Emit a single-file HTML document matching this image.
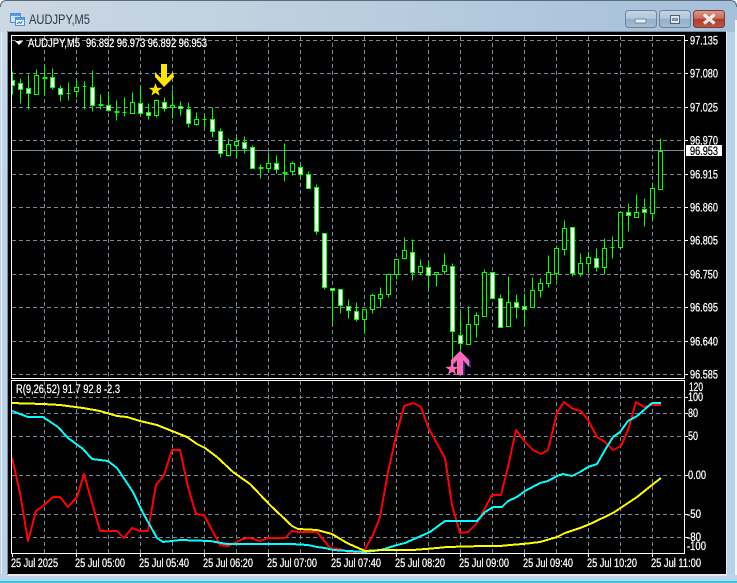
<!DOCTYPE html>
<html><head><meta charset="utf-8"><title>AUDJPY,M5</title>
<style>
html,body{margin:0;padding:0;background:#fff;width:737px;height:583px;overflow:hidden}
svg{display:block}
text{font-family:"Liberation Sans",sans-serif;font-size:11.500px;fill:#fff;stroke:#fff;stroke-width:.25px}
</style></head><body>
<svg width="737" height="583" viewBox="0 0 737 583" xmlns="http://www.w3.org/2000/svg">
<defs>
<linearGradient id="tb" x1="0" x2="1" y1="0" y2="0"><stop offset="0" stop-color="#ccd8e3"/><stop offset=".5" stop-color="#b9cddf"/><stop offset="1" stop-color="#a4c0db"/></linearGradient>
<linearGradient id="lf" x1="0" x2="0" y1="0" y2="1"><stop offset="0" stop-color="#d3dde6"/><stop offset=".22" stop-color="#bdd4eb"/><stop offset="1" stop-color="#b9d2ea"/></linearGradient>
<linearGradient id="bt" x1="0" x2="0" y1="0" y2="1"><stop offset="0" stop-color="#c4d6e6"/><stop offset=".48" stop-color="#afc6da"/><stop offset=".5" stop-color="#94aec8"/><stop offset="1" stop-color="#a3bdd6"/></linearGradient>
<linearGradient id="cl" x1="0" x2="0" y1="0" y2="1"><stop offset="0" stop-color="#dc9a8a"/><stop offset=".48" stop-color="#c8685a"/><stop offset=".5" stop-color="#b03c2c"/><stop offset="1" stop-color="#b85844"/></linearGradient>
<clipPath id="cm"><rect x="12" y="36" width="672" height="342"/></clipPath>
<clipPath id="cs"><rect x="12" y="381" width="672" height="172"/></clipPath>
<polygon id="st" points="0,-7 1.65,-2.27 6.66,-2.16 2.66,.87 4.11,5.66 0,2.8 -4.11,5.66 -2.66,.87 -6.66,-2.16 -1.65,-2.27"/>
</defs>

<!-- window chrome -->
<rect x="0" y="0" width="737" height="583" rx="6" fill="url(#lf)"/>
<path d="M0 6Q0 0 6 0H731Q737 0 737 6V32H0Z" fill="url(#tb)"/>
<path d="M.5 7Q.5 .5 7 .5H730Q736.5 .5 736.5 7" fill="none" stroke="#5c6b78" stroke-width="1"/>
<rect x="1" y="32" width="1" height="542" fill="#e6eef6"/>
<rect x="727" y="32" width="8" height="543" fill="#b8d1ea"/>
<rect x="735" y="20" width="2" height="562" fill="#f2f6fa"/>
<rect x="0" y="575" width="737" height="6" fill="#bad3eb"/>
<rect x="0" y="581" width="737" height="2" fill="#2ccbe0"/>
<rect x="7" y="31" width="720" height="545" fill="#e4eaf0"/>
<rect x="7" y="31" width="719" height="1" fill="#7d8a97"/>
<rect x="7" y="31" width="1" height="544" fill="#7d8a97"/>
<rect x="8" y="32" width="718" height="542" fill="#000"/>

<!-- title icon -->
<g shape-rendering="crispEdges">
<rect x="10.500" y="13.500" width="10" height="9" fill="#cfe2f6" stroke="#4f8fd0"/>
<rect x="11" y="14" width="9" height="2" fill="#5a9be0"/>
<rect x="15.500" y="17.500" width="9" height="8" fill="#eef6fd" stroke="#4f8fd0"/>
<rect x="16" y="18" width="8" height="2" fill="#5a9be0"/>
</g>
<path d="M17 24l2-2 1.500 1.500 2-2.500" fill="none" stroke="#3c78c0" stroke-width="1"/>
<text x="29" y="24" style="font-size:13.500px;fill:#26384a;stroke:none" textLength="61" lengthAdjust="spacingAndGlyphs">AUDJPY,M5</text>

<!-- window buttons -->
<rect x="625.500" y="10.500" width="31" height="17" rx="3" fill="url(#bt)" stroke="#6f8398"/>
<rect x="635" y="19" width="11" height="4" rx="1" fill="#e9eef3" stroke="#5b6e82" stroke-width=".7"/>
<rect x="659.500" y="10.500" width="31" height="17" rx="3" fill="url(#bt)" stroke="#6f8398"/>
<rect x="670.500" y="15.500" width="9" height="8" fill="#dfe8f0" stroke="#4e6075"/>
<rect x="672.500" y="18.500" width="5" height="2" fill="#8ea8c0" stroke="#4e6075" stroke-width=".6"/>
<rect x="693.500" y="10.500" width="31" height="17" rx="3" fill="url(#cl)" stroke="#7a3a38"/>
<path d="M704 14.500L714.500 23.500M714.500 14.500L704 23.500" stroke="#f2ecea" stroke-width="3.200"/>

<!-- grids -->
<g stroke="#778899" stroke-width="1" stroke-dasharray="4 3" fill="none" shape-rendering="crispEdges">
<path clip-path="url(#cm)" d="M12 40.500H684M12 73.500H684M12 107.500H684M12 140.500H684M12 174.500H684M12 207.500H684M12 240.500H684M12 274.500H684M12 307.500H684M12 341.500H684M12 374.500H684"/>
<path clip-path="url(#cm)" d="M44.500 36V378M76.500 36V378M108.500 36V378M140.500 36V378M172.500 36V378M204.500 36V378M236.500 36V378M268.500 36V378M300.500 36V378M332.500 36V378M364.500 36V378M396.500 36V378M428.500 36V378M460.500 36V378M492.500 36V378M524.500 36V378M556.500 36V378M588.500 36V378M620.500 36V378M652.500 36V378"/>
<path clip-path="url(#cs)" d="M12 397.500H684M12 413.500H684M12 436.500H684M12 475.500H684M12 514.500H684M12 537.500H684"/>
<path clip-path="url(#cs)" d="M44.500 381V553M76.500 381V553M108.500 381V553M140.500 381V553M172.500 381V553M204.500 381V553M236.500 381V553M268.500 381V553M300.500 381V553M332.500 381V553M364.500 381V553M396.500 381V553M428.500 381V553M460.500 381V553M492.500 381V553M524.500 381V553M556.500 381V553M588.500 381V553M620.500 381V553M652.500 381V553"/>
</g>
<rect x="12" y="150" width="672" height="1" fill="#778899"/>

<!-- candles -->
<g clip-path="url(#cm)"><g transform="translate(.5 .5)" shape-rendering="crispEdges" stroke="#00ff00" stroke-width="1">
<path fill="none" d="M12 71V94M20 78V103M28 74V109M36 69V94M44 65V94M52 68V89M60 85V101M68 82V100M76 79V97M84 81V109M92 70V111M100 94V109M108 91V111M116 100V120M124 97V116M132 92V113M140 86V115M148 103V119M156 99V117M164 97V111M172 89V118M180 101V115M188 102V127M196 112V125M204 115V127M212 107V137M220 128V157M228 138V156M236 137V157M244 136V153M252 145V168M260 164V178M268 152V172M276 155V173M284 143V181M292 161V175M300 165V178M308 171V188M316 184V234M324 233V289M332 288V325M340 289V313M348 299V318M356 302V321M364 309V333M372 293V313M380 287V307M388 273V297M396 258V279M404 237V259M412 239V280M420 259V274M428 263V289M436 272V286M444 253V274M452 263V358M460 312V350M468 306V344M476 312V337M484 269V316M492 272V299M500 294V327M508 276V326M516 294V318M524 293V326M532 277V307M540 278V297M548 255V287M556 245V280M564 220V255M572 227V276M580 253V276M588 251V273M596 248V271M604 238V274M612 236V258M620 211V247M628 203V231M636 194V217M644 198V226M652 182V220M660 138V189"/>
<path fill="none" d="M42 77H46M66 93H70M82 86H86M98 104H102M114 111H118M122 112H126M202 119H206M258 167H262M282 172H286M610 247H614"/>
<path fill="none" stroke-width="2" d="M42 77.500H47M98 104.500H103M114 111.500H119M258 167.500H263M282 172.500H287"/>
<path fill="#000" d="M34 75h4v19h-4zM74 87h4v4h-4zM130 102h4v11h-4zM154 100h4v15h-4zM170 105h4v2h-4zM194 119h4v5h-4zM226 144h4v11h-4zM234 141h4v4h-4zM266 163h4v5h-4zM290 163h4v8h-4zM362 309h4v10h-4zM370 295h4v14h-4zM378 294h4v4h-4zM386 274h4v20h-4zM394 259h4v15h-4zM402 250h4v8h-4zM418 266h4v6h-4zM434 272h4v2h-4zM442 265h4v6h-4zM466 324h4v20h-4zM474 315h4v9h-4zM482 272h4v44h-4zM506 302h4v24h-4zM530 290h4v17h-4zM538 283h4v7h-4zM546 272h4v11h-4zM554 248h4v25h-4zM562 228h4v21h-4zM578 263h4v10h-4zM586 257h4v6h-4zM602 248h4v19h-4zM618 212h4v35h-4zM634 212h4v5h-4zM650 188h4v25h-4zM658 151h4v38h-4z"/>
<path fill="#fff" d="M10 80h4v5h-4zM18 83h4v6h-4zM26 88h4v5h-4zM50 77h4v10h-4zM58 88h4v6h-4zM90 87h4v18h-4zM106 105h4v5h-4zM138 103h4v10h-4zM146 112h4v3h-4zM162 102h4v6h-4zM178 106h4v2h-4zM186 109h4v14h-4zM210 119h4v12h-4zM218 131h4v22h-4zM242 142h4v6h-4zM250 147h4v21h-4zM274 163h4v6h-4zM298 167h4v7h-4zM306 174h4v14h-4zM314 187h4v44h-4zM322 233h4v54h-4zM330 288h4v2h-4zM338 289h4v16h-4zM346 306h4v4h-4zM354 311h4v8h-4zM410 252h4v20h-4zM426 267h4v8h-4zM450 266h4v65h-4zM458 335h4v8h-4zM490 272h4v26h-4zM498 298h4v29h-4zM514 302h4v5h-4zM522 306h4v3h-4zM570 227h4v46h-4zM594 258h4v9h-4zM626 212h4v3h-4zM642 209h4v3h-4z"/>
</g>
<!-- arrows / stars -->
<polygon points="161,64 167,64 167,78 173,72 174,77 164,87 155,77 155,72 161,78" fill="#ffe600"/>
<use href="#st" x="155.500" y="90" fill="#ffe600"/>
<polygon points="460.500,351 470,361 470,368 464,361 464,375 457,375 457,361 451,367 451,361" fill="#2c3a8c" transform="translate(.7 .4)"/>
<polygon points="460,351 469,360 469,367 463,360 463,375 457,375 457,360 451,366 451,360" fill="#ff69b4"/>
<use href="#st" x="452" y="369" fill="#ff69b4"/>
</g>

<!-- indicator lines -->
<g clip-path="url(#cs)" fill="none" stroke-width="2" stroke-linejoin="round" shape-rendering="crispEdges">
<polyline stroke="#ff0000" points="12,458 20,493 28,541 36,511 43,506 53,497 60,497 68,507 77,497 84,474 100,531 117,531 124,538 132,528 140,531 148,531 156,485 164,475 172,450 180,450 188,487 196,514 204,515 220,545 228,546 243,539 250,538 260,541 268,538 285,538 292,531 298,532 317,532 330,548 340,549 348,552 360,552 365,549 373,535 380,517 388,472 397,432 404,406 413,403 421,407 428,427 445,458 452,505 460,533 468,532 477,523 492,495 501,495 508,467 516,430 525,442 533,450 541,454 548,450 557,413 564,402 573,409 581,411 588,420 597,437 605,442 613,450 621,446 628,430 636,402 644,407 652,405 661,405"/>
<polyline stroke="#00ffff" points="12,411 28,417 43,417 58,427 68,438 83,449 92,459 108,461 117,468 133,492 143,513 157,538 163,542 180,540 210,541 227,544 250,544 292,544 308,545 317,547 325,548 333,550 365,552 381,550 397,545 405,543 430,532 445,521 477,521 485,512 493,507 502,507 508,501 517,497 525,491 540,483 548,481 557,476 563,474 572,476 580,472 588,467 597,464 605,450 613,437 620,432 628,421 637,416 652,403 661,403"/>
<polyline stroke="#ffff00" points="12,403 20,403.300 43,404 60,405 83,408 100,411 117,416 127,417 140,421 157,425 167,429 187,437 197,444 205,448 217,457 233,472 250,484 270,505 292,526 298,529 317,530 332,534 347,543 365,551 381,550 397,550 413,550 437,548 447,547 483,546 500,546 510,545 523,544 540,542 557,537 565,533 580,528 590,524 613,513 637,497 652,485 661,478"/>
</g>

<!-- frames and ticks -->
<g fill="none" stroke="#fff" stroke-width="1" shape-rendering="crispEdges">
<rect x="11.500" y="35.500" width="673" height="343"/>
<rect x="11.500" y="380.500" width="673" height="173"/>
<path d="M685 40.500h3M685 73.500h3M685 107.500h3M685 140.500h3M685 174.500h3M685 207.500h3M685 240.500h3M685 274.500h3M685 307.500h3M685 341.500h3M685 374.500h3M685 397.500h3M685 413.500h3M685 436.500h3M685 475.500h3M685 514.500h3M685 537.500h3"/>
<path d="M12.500 554v3M76.500 554v3M140.500 554v3M204.500 554v3M268.500 554v3M332.500 554v3M396.500 554v3M460.500 554v3M524.500 554v3M588.500 554v3M652.500 554v3"/>
</g>

<!-- price labels -->
<g>
<text x="690" y="44.500" textLength="28" lengthAdjust="spacingAndGlyphs">97.135</text>
<text x="690" y="77.500" textLength="28" lengthAdjust="spacingAndGlyphs">97.080</text>
<text x="690" y="111.500" textLength="28" lengthAdjust="spacingAndGlyphs">97.025</text>
<text x="690" y="144.500" textLength="28" lengthAdjust="spacingAndGlyphs">96.970</text>
<text x="690" y="178.500" textLength="28" lengthAdjust="spacingAndGlyphs">96.915</text>
<text x="690" y="211.500" textLength="28" lengthAdjust="spacingAndGlyphs">96.860</text>
<text x="690" y="244.500" textLength="28" lengthAdjust="spacingAndGlyphs">96.805</text>
<text x="690" y="278.500" textLength="28" lengthAdjust="spacingAndGlyphs">96.750</text>
<text x="690" y="311.500" textLength="28" lengthAdjust="spacingAndGlyphs">96.695</text>
<text x="690" y="345.500" textLength="28" lengthAdjust="spacingAndGlyphs">96.640</text>
<text x="690" y="378.500" textLength="28" lengthAdjust="spacingAndGlyphs">96.585</text>
<rect x="686" y="145" width="36" height="11" fill="#fff"/>
<text x="690" y="155" textLength="28" lengthAdjust="spacingAndGlyphs" style="fill:#000;stroke:#000">96.953</text>
<text x="689" y="391" textLength="14" lengthAdjust="spacingAndGlyphs">120</text>
<text x="688" y="401" textLength="15" lengthAdjust="spacingAndGlyphs">100</text>
<text x="688" y="417" textLength="10" lengthAdjust="spacingAndGlyphs">80</text>
<text x="688" y="440" textLength="10" lengthAdjust="spacingAndGlyphs">50</text>
<text x="688" y="479" textLength="18" lengthAdjust="spacingAndGlyphs">0.00</text>
<text x="687" y="518" textLength="14" lengthAdjust="spacingAndGlyphs">-50</text>
<text x="687" y="541" textLength="14" lengthAdjust="spacingAndGlyphs">-80</text>
<text x="687" y="550" textLength="19" lengthAdjust="spacingAndGlyphs">-100</text>
</g>

<!-- header labels -->
<polygon points="15,41 23,41 19,45" fill="#fff"/>
<text x="28" y="47" textLength="52" lengthAdjust="spacingAndGlyphs">AUDJPY,M5</text>
<text x="86" y="47" textLength="121" lengthAdjust="spacingAndGlyphs">96.892 96.973 96.892 96.953</text>
<text x="16" y="393" textLength="104" lengthAdjust="spacingAndGlyphs">R(9,26,52) 91.7 92.8 -2.3</text>

<!-- time labels -->
<g>
<text x="11" y="567" textLength="47" lengthAdjust="spacingAndGlyphs">25 Jul 2025</text>
<text x="75" y="567" textLength="50" lengthAdjust="spacingAndGlyphs">25 Jul 05:00</text>
<text x="139" y="567" textLength="50" lengthAdjust="spacingAndGlyphs">25 Jul 05:40</text>
<text x="203" y="567" textLength="50" lengthAdjust="spacingAndGlyphs">25 Jul 06:20</text>
<text x="267" y="567" textLength="50" lengthAdjust="spacingAndGlyphs">25 Jul 07:00</text>
<text x="331" y="567" textLength="50" lengthAdjust="spacingAndGlyphs">25 Jul 07:40</text>
<text x="395" y="567" textLength="50" lengthAdjust="spacingAndGlyphs">25 Jul 08:20</text>
<text x="459" y="567" textLength="50" lengthAdjust="spacingAndGlyphs">25 Jul 09:00</text>
<text x="523" y="567" textLength="50" lengthAdjust="spacingAndGlyphs">25 Jul 09:40</text>
<text x="587" y="567" textLength="50" lengthAdjust="spacingAndGlyphs">25 Jul 10:20</text>
<text x="651" y="567" textLength="50" lengthAdjust="spacingAndGlyphs">25 Jul 11:00</text>
</g>
</svg>
</body></html>
